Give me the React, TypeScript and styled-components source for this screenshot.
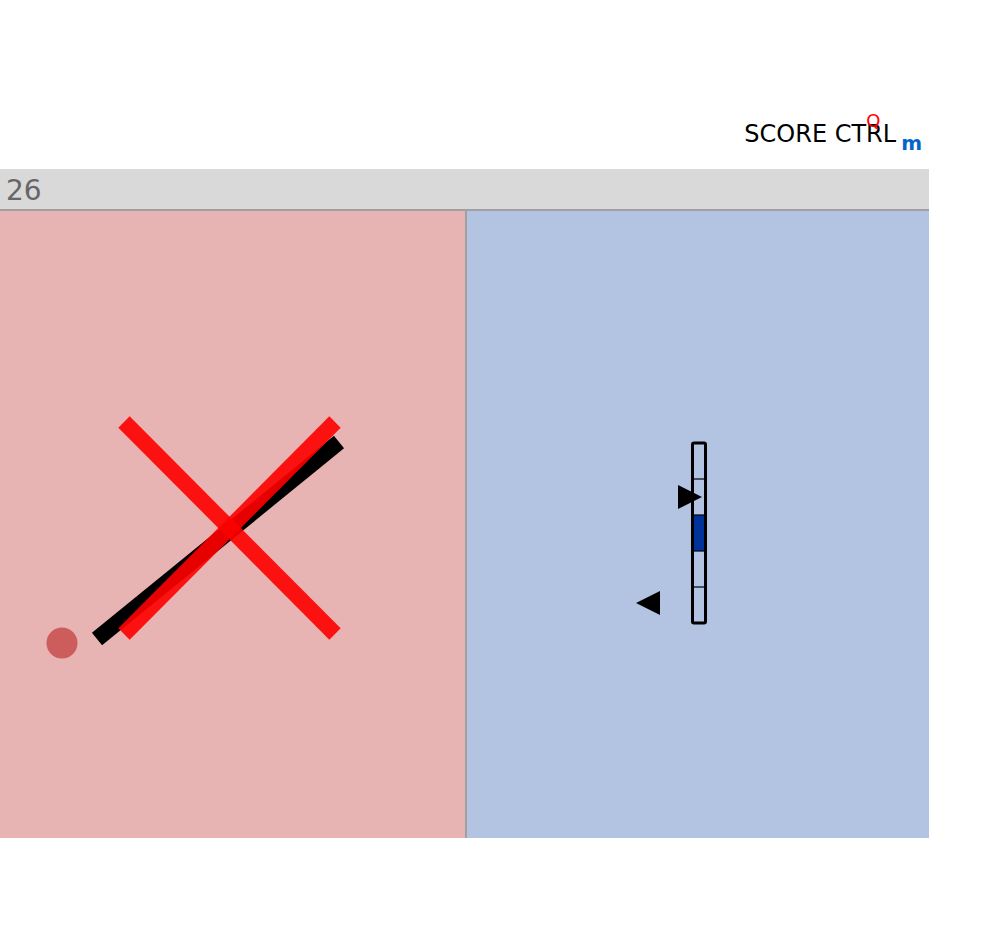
import React from "react";
import styled, { createGlobalStyle } from "styled-components";

const Global = createGlobalStyle`
  html, body { margin: 0; padding: 0; background: #ffffff; }
  body { font-family: "DejaVu Sans", sans-serif; }
`;

const Page = styled.div`
  width: 929px;
  display: flex;
  flex-direction: column;
`;

const Header = styled.div`
  height: 169px;
  display: flex;
  justify-content: flex-end;
  align-items: flex-start;
  box-sizing: border-box;
  padding-top: 119px;
  padding-right: 7px;
`;

const Title = styled.div`
  position: relative;
  font-family: "DejaVu Sans", sans-serif;
  font-size: 24px;
  color: #000;
  line-height: 30px;
  white-space: nowrap;
`;

const Sup = styled.span`
  position: absolute;
  left: 122px;
  top: -13px;
  font-size: 18px;
  color: #ff0000;
`;

const Sub = styled.span`
  display: inline-block;
  margin-left: 5px;
  font-size: 20px;
  font-weight: bold;
  color: #0066cc;
  transform: translateY(8px);
`;

const ScoreBar = styled.div`
  background: #d9d9d9;
  border-bottom: 2px solid #a0a0a0;
  display: flex;
  align-items: center;
  padding-left: 6px;
  padding-top: 4px;
  box-sizing: border-box;
  height: 42px;
`;

const Score = styled.span`
  font-family: "DejaVu Sans", sans-serif;
  font-size: 28px;
  color: #666666;
  line-height: 1;
`;

const Arena = styled.div`
  display: flex;
  height: 627px;
`;

const Panel = styled.div<{ $bg: string; $w: number }>`
  position: relative;
  width: ${(p) => p.$w}px;
  background: ${(p) => p.$bg};
`;

const Divider = styled.div`
  width: 2px;
  background: #a0a0a0;
`;

const Canvas = styled.svg`
  position: absolute;
  inset: 0;
  width: 100%;
  height: 100%;
  display: block;
`;

export default function App() {
  const oy = 211;
  const bx = 467;
  return (
    <>
      <Global />
      <Page>
        <Header>
          <Title>
            SCORE CTRL<Sup>Q</Sup>
            <Sub>m</Sub>
          </Title>
        </Header>
        <ScoreBar>
          <Score>26</Score>
        </ScoreBar>
        <Arena>
          <Panel $bg="#e7b3b3" $w={465}>
            <Canvas viewBox="0 0 465 627">
              <circle cx={62} cy={643 - oy} r={15.5} fill="#cd5c5c" />
              <line x1={97} y1={639 - oy} x2={339} y2={442 - oy} stroke="#000" strokeWidth={16} />
              <g opacity={0.9}>
                <line x1={124} y1={422 - oy} x2={335} y2={634 - oy} stroke="#ff0000" strokeWidth={16} />
              </g>
              <g opacity={0.9}>
                <line x1={335} y1={422 - oy} x2={124} y2={634 - oy} stroke="#ff0000" strokeWidth={16} />
              </g>
            </Canvas>
          </Panel>
          <Divider />
          <Panel $bg="#b3c3e2" $w={462}>
            <Canvas viewBox="0 0 462 627">
              <rect x={692 - bx} y={515 - oy} width={13} height={36} fill="#003399" />
              {[479, 515, 551, 587].map((y) => (
                <line key={y} x1={692 - bx} x2={706 - bx} y1={y - oy} y2={y - oy} stroke="#000" strokeWidth={1.2} />
              ))}
              <rect x={692.5 - bx} y={443 - oy} width={13} height={180} rx={1.5} fill="none" stroke="#000" strokeWidth={3} />
              <polygon points={`${678 - bx},${485 - oy} ${702 - bx},${497 - oy} ${678 - bx},${509 - oy}`} fill="#000" />
              <polygon points={`${636 - bx},${603 - oy} ${660 - bx},${591 - oy} ${660 - bx},${615 - oy}`} fill="#000" />
            </Canvas>
          </Panel>
        </Arena>
      </Page>
    </>
  );
}
